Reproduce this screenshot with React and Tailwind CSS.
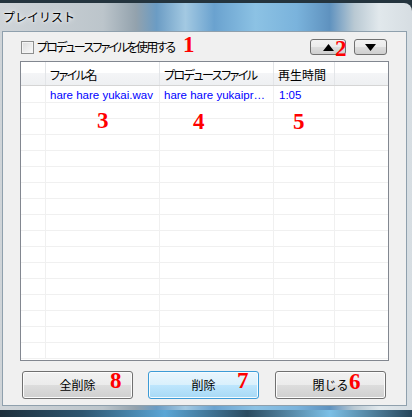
import React from "react";

/* ================= DATA ================= */
const rows = [
  { file: "hare hare yukai.wav", produce: "hare hare yukaipr…", time: "1:05" },
];
const EMPTY_ROWS = 16;

const jp = "font-['Noto_Sans_CJK_JP',sans-serif]";
const kana = "font-['Noto_Sans_CJK_JP',sans-serif] [font-feature-settings:'palt'] tracking-[-1.5px]";

/* ================= BUTTON ================= */
const WinButton = ({ children, primary, className = "" }) => (
  <button
    className={`${className} h-[28px] rounded-[3px] border text-[12px] text-black ${jp} ${
      primary
        ? "border-[#3c9bd6] bg-[linear-gradient(#eaf6fd_0%,#d9f0fc_50%,#bee6fd_50%,#a7d9f5_100%)] shadow-[inset_0_0_0_1px_#f4fbff]"
        : "border-[#707070] bg-[linear-gradient(#f2f2f2_0%,#ebebeb_50%,#dddddd_50%,#cfcfcf_100%)] shadow-[inset_0_0_0_1px_#fcfcfc]"
    }`}
  >
    {children}
  </button>
);

const Arrow = ({ down }) => (
  <svg width="11" height="7" viewBox="0 0 11 7">
    <polygon points={down ? "0,0 11,0 5.5,7" : "5.5,0 11,7 0,7"} fill="#000" />
  </svg>
);

/* ================= COMPONENT ================= */
export default function App() {
  const num = "absolute font-['Liberation_Serif',serif] font-bold text-[23px] leading-none text-[#ff0000]";

  return (
    <div className="relative w-[412px] h-[417px] overflow-hidden bg-[#24343e]">
      {/* GLASS FRAME */}
      <div className="mt-[3px] h-[407px] rounded-tr-[8px] bg-[linear-gradient(90deg,#cfd4d8_0%,#bcc5cb_25%,#93a2ad_33%,#6b9cc4_38%,#a3c9e2_45%,#6aa2cf_52%,#8cc2e4_62%,#7ab3dc_72%,#5f92bf_80%,#b9c9d3_86%,#e1e8ec_92%,#d6dde2_100%)] flex flex-col">
        {/* TITLE */}
        <div className={`h-[28px] flex items-center pl-[3px] text-[12px] text-black ${jp} [text-shadow:0_0_6px_#ffffff,0_0_3px_#ffffff]`}>
          プレイリスト
        </div>

        {/* CLIENT */}
        <div className="ml-[2px] mr-[5px] h-[375px] border border-[#8fa0ad] bg-[#f0f0f0] flex flex-col px-[17px] pt-[7px]">
          {/* TOP ROW */}
          <div className="h-[16px] flex items-center">
            <div className="ml-[1px] w-[13px] h-[13px] border border-[#8e8f8f] bg-[linear-gradient(135deg,#dcdcdc,#fafafa)] shadow-[inset_0_0_0_1px_#f4f4f4]" />
            <span className={`ml-[3px] text-[12px] text-black ${jp} [font-feature-settings:'palt'] tracking-[-1.8px]`}>プロデュースファイルを使用する</span>
            <div className="ml-auto mr-[2px] flex gap-[8px]">
              <button className="w-[36px] h-[16px] rounded-[3px] border border-[#707070] bg-[linear-gradient(#f2f2f2_0%,#ebebeb_50%,#dddddd_50%,#cfcfcf_100%)] flex items-center justify-center">
                <Arrow />
              </button>
              <button className="w-[33px] h-[16px] rounded-[3px] border border-[#707070] bg-[linear-gradient(#f2f2f2_0%,#ebebeb_50%,#dddddd_50%,#cfcfcf_100%)] flex items-center justify-center">
                <Arrow down />
              </button>
            </div>
          </div>

          {/* LIST */}
          <div className="mt-[6px] w-[369px] h-[300px] border border-[#828790] bg-white overflow-hidden">
            <div className="h-[24px] flex border-b border-[#d5d5d5] bg-[linear-gradient(#ffffff_0%,#ffffff_50%,#f4f5f7_50%,#eef0f2_100%)] text-[12px] text-black">
              <div className="w-[25px] border-r border-[#e3e5e8]" />
              <div className={`w-[114px] border-r border-[#e3e5e8] pl-[4px] pt-[4px] ${kana}`}>ファイル名</div>
              <div className={`w-[114px] border-r border-[#e3e5e8] pl-[4px] pt-[4px] whitespace-nowrap ${kana}`}>プロデュースファイル</div>
              <div className={`w-[61px] border-r border-[#e3e5e8] pl-[4px] pt-[4px] ${jp}`}>再生時間</div>
              <div className="flex-1" />
            </div>

            {rows.map((r) => (
              <div key={r.file} className="h-[17px] flex border-b border-[#f0f0f0] text-[11.5px] text-[#0000ff] font-['Liberation_Sans',sans-serif]">
                <div className="w-[25px] border-r border-[#f0f0f0]" />
                <div className="w-[114px] border-r border-[#f0f0f0] pl-[4px] pt-[1px] truncate">{r.file}</div>
                <div className="w-[114px] border-r border-[#f0f0f0] pl-[4px] pt-[1px] truncate">{r.produce}</div>
                <div className="w-[61px] border-r border-[#f0f0f0] pl-[5px] pt-[1px]">{r.time}</div>
                <div className="flex-1" />
              </div>
            ))}

            {Array.from({ length: EMPTY_ROWS }).map((_, i) => (
              <div key={i} className="h-[16px] flex border-b border-[#f0f0f0]">
                <div className="w-[25px] border-r border-[#f0f0f0]" />
                <div className="w-[114px] border-r border-[#f0f0f0]" />
                <div className="w-[114px] border-r border-[#f0f0f0]" />
                <div className="w-[61px] border-r border-[#f0f0f0]" />
                <div className="flex-1" />
              </div>
            ))}
          </div>

          {/* BUTTONS */}
          <div className="mt-[10px] flex pl-[2px]">
            <WinButton className="w-[111px]">全削除</WinButton>
            <WinButton primary className="ml-[15px] w-[111px]">削除</WinButton>
            <WinButton className="ml-[16px] w-[111px]">閉じる</WinButton>
          </div>
        </div>
      </div>

      {/* TASKBAR STRIP */}
      <div className="h-[7px] bg-[linear-gradient(90deg,#1d2f3b_0%,#2d5670_20%,#5aa6d6_40%,#2b4b60_60%,#7cc0e6_80%,#27465a_100%)]" />

      {/* ANNOTATIONS */}
      <span className={`${num} left-[183px] top-[33px]`}>1</span>
      <span className={`${num} left-[335px] top-[37px]`}>2</span>
      <span className={`${num} left-[97px] top-[109px]`}>3</span>
      <span className={`${num} left-[193px] top-[110px]`}>4</span>
      <span className={`${num} left-[293px] top-[110px]`}>5</span>
      <span className={`${num} left-[349px] top-[370px]`}>6</span>
      <span className={`${num} left-[237px] top-[369px]`}>7</span>
      <span className={`${num} left-[110px] top-[369px]`}>8</span>
    </div>
  );
}
